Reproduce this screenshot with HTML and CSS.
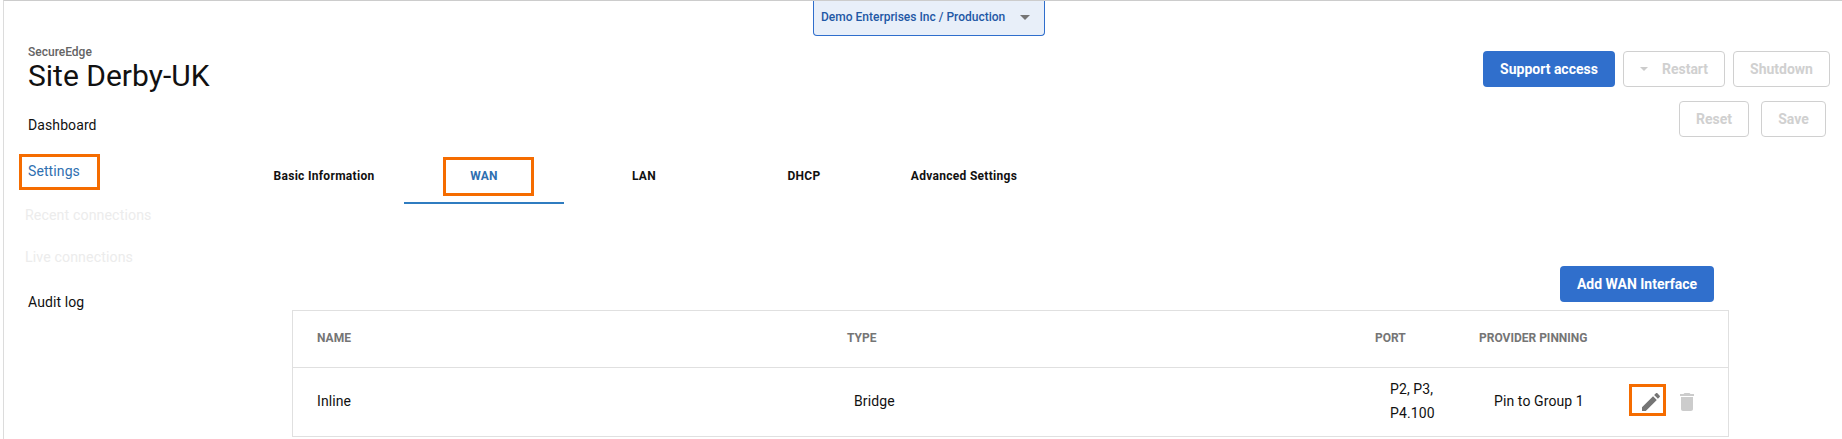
FILE: index.html
```html
<!DOCTYPE html>
<html lang="en">
<head>
<meta charset="utf-8">
<title>Site Derby-UK</title>
<link rel="stylesheet" href="styles.css">
</head>
<body>
<div class="page">
  <div class="topbar">
    <div class="scope"><span class="scope-text">Demo Enterprises Inc / Production</span><span class="caret"></span></div>
  </div>
  <div class="layout">
    <aside class="side">
      <div class="eyebrow">SecureEdge</div>
      <h1 class="title">Site Derby-UK</h1>
      <nav class="nav">
        <a class="nav-item nav-first">Dashboard</a>
        <a class="nav-item nav-active">Settings<span class="mark mark-settings"></span></a>
        <a class="nav-item nav-off">Recent connections</a>
        <a class="nav-item nav-off">Live connections</a>
        <a class="nav-item nav-last">Audit log</a>
      </nav>
    </aside>
    <main class="main">
      <div class="actions">
        <button class="btn btn-primary btn-support">Support access</button>
        <button class="btn btn-off btn-restart"><span class="caret caret-off"></span>Restart</button>
        <button class="btn btn-off btn-shutdown">Shutdown</button>
      </div>
      <div class="actions actions-second">
        <button class="btn btn-off btn-reset">Reset</button>
        <button class="btn btn-off btn-save">Save</button>
      </div>
      <div class="tabs">
        <div class="tab">Basic Information</div>
        <div class="tab tab-active">WAN<span class="mark mark-wan"></span></div>
        <div class="tab">LAN</div>
        <div class="tab">DHCP</div>
        <div class="tab">Advanced Settings</div>
      </div>
      <div class="toolbar">
        <button class="btn btn-primary btn-add">Add WAN Interface</button>
      </div>
      <table class="grid">
        <colgroup>
          <col class="col-name"><col class="col-type"><col class="col-port"><col class="col-pin"><col class="col-act">
        </colgroup>
        <thead>
          <tr><th>NAME</th><th>TYPE</th><th>PORT</th><th>PROVIDER PINNING</th><th></th></tr>
        </thead>
        <tbody>
          <tr>
            <td>Inline</td>
            <td class="cell-type">Bridge</td>
            <td class="cell-port">P2, P3, P4.100</td>
            <td class="cell-pin">Pin to Group 1</td>
            <td class="cell-act">
              <div class="icons">
                <span class="icon-wrap">
                  <svg class="icon icon-edit" viewBox="0 0 24 24"><path d="M3 17.25V21h3.75L17.81 9.94l-3.75-3.75L3 17.25zM20.71 7.04c.39-.39.39-1.02 0-1.41l-2.34-2.34c-.39-.39-1.02-.39-1.41 0l-1.83 1.83 3.75 3.75 1.83-1.83z"/></svg>
                  <span class="mark mark-edit"></span>
                </span>
                <svg class="icon icon-del" viewBox="0 0 24 24"><path d="M6 19c0 1.1.9 2 2 2h8c1.1 0 2-.9 2-2V7H6v12zM19 4h-3.5l-1-1h-5l-1 1H5v2h14V4z"/></svg>
              </div>
            </td>
          </tr>
        </tbody>
      </table>
    </main>
  </div>
</div>
</body>
</html>
```

FILE: styles.css
```css
* { box-sizing: border-box; }
html, body { margin: 0; padding: 0; background: #fff; }
body { font-family: Roboto, "Liberation Sans", sans-serif; color: #111; overflow: hidden; }

.page {
  width: 1842px;
  height: 439px;
  margin-left: 3px;
  border-top: 1px solid #ccc;
  border-left: 1px solid #dcdcdc;
  overflow: hidden;
  position: relative;
}

.topbar { height: 35px; padding-left: 809px; }
.scope {
  width: 232px;
  height: 35px;
  display: flex;
  align-items: center;
  justify-content: space-between;
  padding: 0 14px 2px 7px;
  background: #e8eff9;
  border: 1px solid #2f6ecc;
  border-top: 0;
  border-radius: 0 0 4px 4px;
  color: #1f58a5;
  font-size: 12px;
  font-weight: 500;
}
.caret {
  width: 0;
  height: 0;
  border-left: 5px solid transparent;
  border-right: 5px solid transparent;
  border-top: 5px solid #757575;
}
.caret-off { border-top-color: #ccc; border-left-width: 4px; border-right-width: 4px; border-top-width: 4px; margin-right: 14px; }

.layout { display: grid; grid-template-columns: 240px 1fr; }

.side { padding: 9px 0 0 24px; }
.eyebrow { font-size: 12px; line-height: 14px; font-weight: 500; color: #646464; }
.title { margin: -1px 0 0; font-size: 30px; line-height: 36px; font-weight: 400; color: #111; }

.nav { display: flex; flex-direction: column; margin-top: 13px; font-size: 14px; line-height: 20px; letter-spacing: .1px; }
.nav-item { display: block; position: relative; width: max-content; color: #111; }
.nav-first { margin-top: 8px; }
.nav-active { color: #2f6fb0; margin-top: 26px; }
.nav-off { color: #ececec; margin-left: -3px; font-size: 14.2px; margin-top: 24px; }
.nav-off + .nav-off { margin-top: 22px; }
.nav-last { margin-top: 25px; }

.main { width: 1598px; }
.actions { display: flex; justify-content: flex-end; gap: 8px; margin-top: 15px; padding-right: 12px; }
.actions-second { margin-top: 14px; gap: 12px; padding-right: 16px; }

.btn {
  height: 36px;
  display: inline-flex;
  align-items: center;
  justify-content: center;
  border-radius: 4px;
  padding: 0;
  font-family: Roboto, "Liberation Sans", sans-serif;
  font-size: 14px;
  font-weight: 700;
}
.btn-primary { background: #306fcc; border: 0; color: #fff; }
.btn-off { background: #fff; border: 1px solid #d0d0d0; color: #d0d0d0; }
.btn-support { width: 132px; }
.btn-restart { width: 102px; }
.btn-shutdown { width: 97px; }
.btn-reset { width: 70px; }
.btn-save { width: 65px; }
.btn-add { width: 154px; }

.tabs { display: flex; margin-top: 15px; }
.tab {
  position: relative;
  width: 160px;
  height: 52px;
  padding-bottom: 2px;
  display: flex;
  align-items: center;
  justify-content: center;
  font-size: 12px;
  font-weight: 700;
  letter-spacing: .3px;
  color: #111;
  border-bottom: 2px solid transparent;
}
.tab-active { color: #2f6fb0; border-bottom-color: #2f7cc0; }

.toolbar { display: flex; justify-content: flex-end; margin-top: 62px; padding-right: 128px; }

.grid {
  margin: 8px 0 0 48px;
  width: 1437px;
  table-layout: fixed;
  border-collapse: separate;
  border-spacing: 0;
  border: 1px solid #e0e0e0;
}
.col-name { width: 530px; }
.col-type { width: 528px; }
.col-port { width: 104px; }
.col-pin { width: 156px; }
.col-act { width: 117px; }

.grid th {
  height: 57px;
  padding: 0 0 2px 24px;
  text-align: left;
  font-size: 12px;
  font-weight: 700;
  color: #757575;
  border-bottom: 1px solid #e0e0e0;
}
.grid td {
  height: 68px;
  padding: 0 0 2px 24px;
  font-size: 14px;
  line-height: 24px;
  letter-spacing: .1px;
  color: #111;
}
.grid .cell-type { padding-left: 31px; }
.grid .cell-port { padding-left: 39px; }
.grid .cell-pin { padding-left: 39px; }
.grid .cell-act { padding: 0 0 0 28px; }

.icons { display: flex; gap: 12px; align-items: center; }
.icon-wrap { position: relative; display: flex; }
.icon { width: 24px; height: 24px; display: block; }
.icon-edit { fill: #757575; }
.icon-del { fill: #ccc; }

.mark { position: absolute; border: 3px solid #f56c00; pointer-events: none; }
.mark-settings { left: -9px; top: -7px; width: 81px; height: 36px; }
.mark-wan { left: 39px; top: 5px; width: 91px; height: 39px; }
.mark-edit { left: -10px; top: -6px; width: 37px; height: 32px; }
```
